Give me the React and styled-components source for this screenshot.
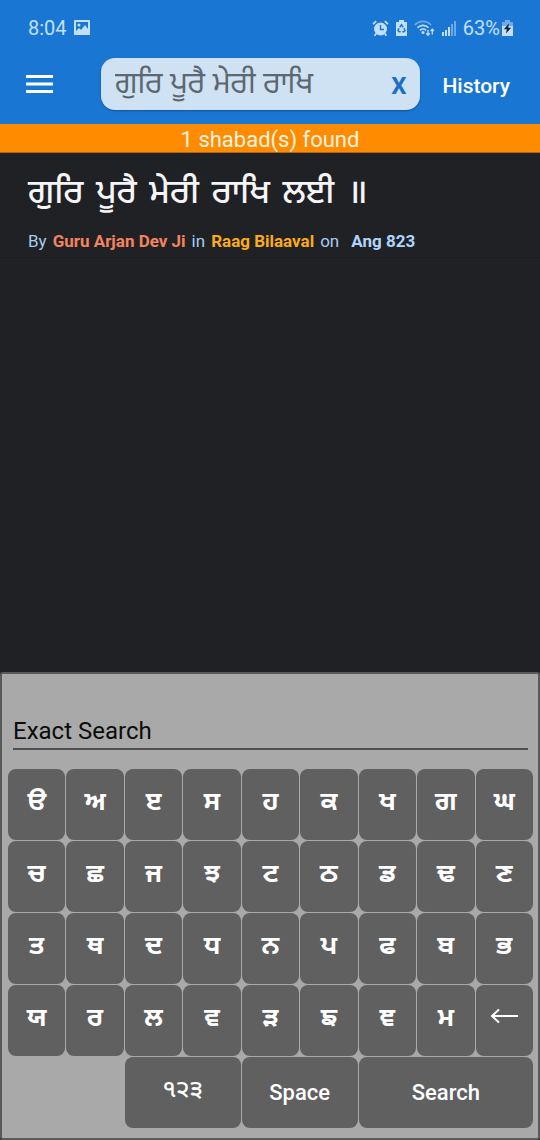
import React, { useState } from "react";
import styled, { createGlobalStyle } from "styled-components";

const GlobalStyle = createGlobalStyle`
  *, *::before, *::after { box-sizing: border-box; }
  body { margin: 0; background: #202125; }
  body, button, input, select {
    font-family: Roboto, "Noto Sans Gurmukhi", "Noto Sans", sans-serif;
  }
`;

const Screen = styled.div`
  display: flex;
  flex-direction: column;
  min-height: 100vh;
  background: #202125;
`;

const TopArea = styled.header`
  background: #1976d3;
`;

const StatusBar = styled.div`
  display: flex;
  align-items: center;
  justify-content: space-between;
  height: 56px;
  padding: 0 27px 0 28px;
  color: #c2e0fb;
  font-size: 20px;
`;

const StatusGroup = styled.div`
  display: flex;
  align-items: center;
  gap: 7px;
`;

const Battery = styled.span`
  display: flex;
  align-items: center;
  gap: 2px;
`;

const Toolbar = styled.div`
  display: flex;
  align-items: center;
  height: 68px;
  padding: 0 30px 12px 26px;
`;

const MenuButton = styled.button`
  display: flex;
  padding: 0;
  border: 0;
  background: none;
  color: #fff;
`;

const SearchBox = styled.div`
  display: flex;
  flex: 1;
  align-items: center;
  min-width: 0;
  height: 52px;
  margin: 0 22px 0 48px;
  padding: 0 12px 0 14px;
  border-radius: 14px;
  background: #cfe2f3;
  box-shadow: 0 1px 2px rgba(0, 0, 0, 0.3);
`;

const SearchInput = styled.input`
  flex: 1;
  min-width: 0;
  height: 52px;
  padding: 2px 0 0;
  border: 0;
  outline: 0;
  background: none;
  color: #5c6770;
  font-size: 30px;
`;

const ClearButton = styled.button`
  padding: 4px 2px 0;
  border: 0;
  background: none;
  color: #1b6fc4;
  font-size: 24px;
  font-weight: 700;
`;

const HistoryButton = styled.button`
  padding: 4px 0 0;
  border: 0;
  background: none;
  color: #fff;
  font-size: 21px;
  font-weight: 500;
`;

const ResultBanner = styled.div`
  height: 29px;
  padding-top: 1px;
  border-bottom: 1px solid #b36505;
  background: #ff8c00;
  color: #fff4e0;
  font-size: 22px;
  line-height: 30px;
  text-align: center;
`;

const Results = styled.main`
  flex: 1;
`;

const Shabad = styled.article`
  padding: 12px 28px 6px;
  border-bottom: 1px solid #1c1c20;
`;

const Line = styled.h1`
  margin: 0;
  color: #f5f5f8;
  font-size: 34px;
  font-weight: 500;
  line-height: 52px;
`;

const Word = styled.span`
  margin-right: 4px;
`;

const Meta = styled.p`
  display: flex;
  gap: 6px;
  margin: 14px 0 0;
  color: #a5cdf0;
  font-size: 17px;
  line-height: 20px;
`;

const MetaValue = styled.span`
  color: ${(p) => p.$color};
  font-weight: 700;
`;

const Ang = styled(MetaValue)`
  padding-left: 6px;
`;

const Keyboard = styled.section`
  padding: 35px 5px 10px 6px;
  border: 2px solid #5a5a5a;
  border-radius: 3px;
  background: #a9a9a9;
`;

const ModeSelect = styled.select`
  display: block;
  width: calc(100% - 10px);
  height: 41px;
  margin: 0 5px 19px;
  padding: 4px 0 0;
  border: 0;
  border-bottom: 2px solid #4f4f4f;
  border-radius: 0;
  outline: 0;
  appearance: none;
  background: none;
  color: #0c0c0c;
  font-size: 24px;
`;

const KeyGrid = styled.div`
  display: grid;
  grid-template-columns: repeat(9, 1fr);
  grid-auto-rows: 71px;
  gap: 1px;
`;

const Key = styled.button`
  display: flex;
  align-items: center;
  justify-content: center;
  min-width: 0;
  padding: 0 0 2px;
  border: 0;
  border-radius: 8px;
  background: #606060;
  color: #fff;
  font-size: 26px;
  font-weight: 700;
`;

const BackspaceKey = styled(Key)`
  padding: 0 0 10px;
`;

const WideKey = styled(Key)`
  grid-column: ${(p) => p.$column};
  padding: 0;
  font-size: 22px;
  font-weight: 500;
`;

const DigitsKey = styled(WideKey)`
  padding: 0 0 4px;
  font-size: 24px;
`;

const LETTERS = [..."ੳਅੲਸਹਕਖਗਘਚਛਜਝਟਠਡਢਣਤਥਦਧਨਪਫਬਭਯਰਲਵੜਙਞਮ"];
const SHABAD_LINE = "ਗੁਰਿ ਪੂਰੈ ਮੇਰੀ ਰਾਖਿ ਲਈ ॥";

const PictureIcon = () => (
  <svg width="16" height="16" viewBox="0 0 16 16" aria-hidden="true">
    <path
      fill="currentColor"
      fillRule="evenodd"
      d="M1 0h14a1 1 0 0 1 1 1v14H0V1a1 1 0 0 1 1-1zM2 2v9l3-3 2 2 4-5 3 4V2zM5 3.400a1.500 1.500 0 1 1 0 3 1.500 1.500 0 0 1 0-3z"
    />
  </svg>
);

const AlarmIcon = () => (
  <svg width="17" height="17" viewBox="0 0 17 17" aria-hidden="true">
    <circle cx="8.500" cy="9" r="6.500" fill="currentColor" />
    <path
      d="M1 4.200 4.200 1.200M16 4.200 12.800 1.200M4.300 13.500 2.500 15.800M12.700 13.500l1.800 2.300"
      stroke="currentColor"
      strokeWidth="1.700"
      fill="none"
    />
    <path d="M8.500 5v4.500H12" stroke="#1976d3" strokeWidth="1.400" fill="none" />
  </svg>
);

const SaverIcon = () => (
  <svg width="11" height="16" viewBox="0 0 11 16" aria-hidden="true">
    <path fill="currentColor" d="M3 0h5v2h2.500q.5 0 .5.5v13q0 .5-.5.5H.5q-.5 0-.5-.5v-13Q0 2 .5 2H3z" />
    <path
      d="M3.800 7.200 5.500 4.800l1.700 2.400M8 8.300l1 2.200-1.200 1.300H6.300M4.700 11.800H3.200L2 10.500l1-2.200"
      stroke="#1976d3"
      strokeWidth="1.500"
      fill="none"
    />
  </svg>
);

const WifiIcon = () => (
  <svg width="21" height="17" viewBox="0 0 21 17" aria-hidden="true">
    <g fill="none" stroke="currentColor" strokeWidth="1.600">
      <path opacity=".5" d="M.8 5C5.300.2 12.700.2 17.200 5" />
      <path d="M3.500 7.800c3-3.200 8-3.200 11 0" />
      <path d="M6 10.300c1.700-1.600 4.300-1.600 6 0" />
    </g>
    <circle cx="9" cy="12.500" r="1.500" fill="currentColor" />
    <path
      d="M14 10v5M12.300 13.300l1.700 1.900 1.700-1.900M18.300 14.500v-5M16.600 11l1.700-1.900L20 11"
      stroke="currentColor"
      strokeWidth="1.300"
      fill="none"
    />
  </svg>
);

const SignalIcon = () => (
  <svg width="14" height="15" viewBox="0 0 14 15" aria-hidden="true">
    <g fill="currentColor">
      <path d="M0 11h2v4H0zM3 9h2v6H3zM6 6h2v9H6z" />
      <path opacity=".5" d="M9 3h2v12H9zM12 0h2v15h-2z" />
    </g>
  </svg>
);

const BatteryIcon = () => (
  <svg width="11" height="16" viewBox="0 0 11 16" aria-hidden="true">
    <path fill="currentColor" opacity=".5" d="M3 0h5v2h3v4H0V2h3z" />
    <path fill="currentColor" d="M0 6h11v9.500q0 .5-.5.500H.5Q0 16 0 15.500z" />
    <path fill="#10202e" d="M7 3.500 1.800 9.300h3L4 13.500l5.200-5.700h-3z" />
  </svg>
);

const MenuIcon = () => (
  <svg width="27" height="20" viewBox="0 0 27 20" aria-hidden="true">
    <path fill="currentColor" d="M0 1h27v3H0zM0 8.500h27v3H0zM0 16h27v3H0z" />
  </svg>
);

const BackIcon = () => (
  <svg width="28" height="16" viewBox="0 0 28 16" aria-hidden="true">
    <path d="M28 8H2M9 1.500 2 8l7 6.500" fill="none" stroke="currentColor" strokeWidth="2" />
  </svg>
);

export default function App() {
  const [query, setQuery] = useState("ਗੁਰਿ ਪੂਰੈ ਮੇਰੀ ਰਾਖਿ");

  return (
    <Screen>
      <GlobalStyle />
      <TopArea>
        <StatusBar>
          <StatusGroup>
            <span>8:04</span>
            <PictureIcon />
          </StatusGroup>
          <StatusGroup>
            <AlarmIcon />
            <SaverIcon />
            <WifiIcon />
            <SignalIcon />
            <Battery>
              <span>63%</span>
              <BatteryIcon />
            </Battery>
          </StatusGroup>
        </StatusBar>
        <Toolbar>
          <MenuButton type="button" aria-label="Menu">
            <MenuIcon />
          </MenuButton>
          <SearchBox>
            <SearchInput
              type="text"
              aria-label="Search"
              value={query}
              onChange={(e) => setQuery(e.target.value)}
            />
            <ClearButton type="button" onClick={() => setQuery("")}>
              X
            </ClearButton>
          </SearchBox>
          <HistoryButton type="button">History</HistoryButton>
        </Toolbar>
      </TopArea>
      <ResultBanner>1 shabad(s) found</ResultBanner>
      <Results>
        <Shabad>
          <Line>
            {SHABAD_LINE.split(" ").map((word) => (
              <React.Fragment key={word}>
                <Word>{word}</Word>{" "}
              </React.Fragment>
            ))}
          </Line>
          <Meta>
            <span>By</span>
            <MetaValue $color="#f4845f">Guru Arjan Dev Ji</MetaValue>
            <span>in</span>
            <MetaValue $color="#fbab18">Raag Bilaaval</MetaValue>
            <span>on</span>
            <Ang $color="#afd6fa">Ang 823</Ang>
          </Meta>
        </Shabad>
      </Results>
      <Keyboard aria-label="Gurmukhi keyboard">
        <ModeSelect aria-label="Search type" defaultValue="exact">
          <option value="exact">Exact Search</option>
        </ModeSelect>
        <KeyGrid>
          {LETTERS.map((letter) => (
            <Key key={letter} type="button" onClick={() => setQuery(query + letter)}>
              {letter}
            </Key>
          ))}
          <BackspaceKey
            type="button"
            aria-label="Backspace"
            onClick={() => setQuery(query.slice(0, -1))}
          >
            <BackIcon />
          </BackspaceKey>
          <DigitsKey type="button" $column="3 / span 2">
            ੧੨੩
          </DigitsKey>
          <WideKey type="button" $column="span 2" onClick={() => setQuery(query + " ")}>
            Space
          </WideKey>
          <WideKey type="button" $column="span 3">
            Search
          </WideKey>
        </KeyGrid>
      </Keyboard>
    </Screen>
  );
}
